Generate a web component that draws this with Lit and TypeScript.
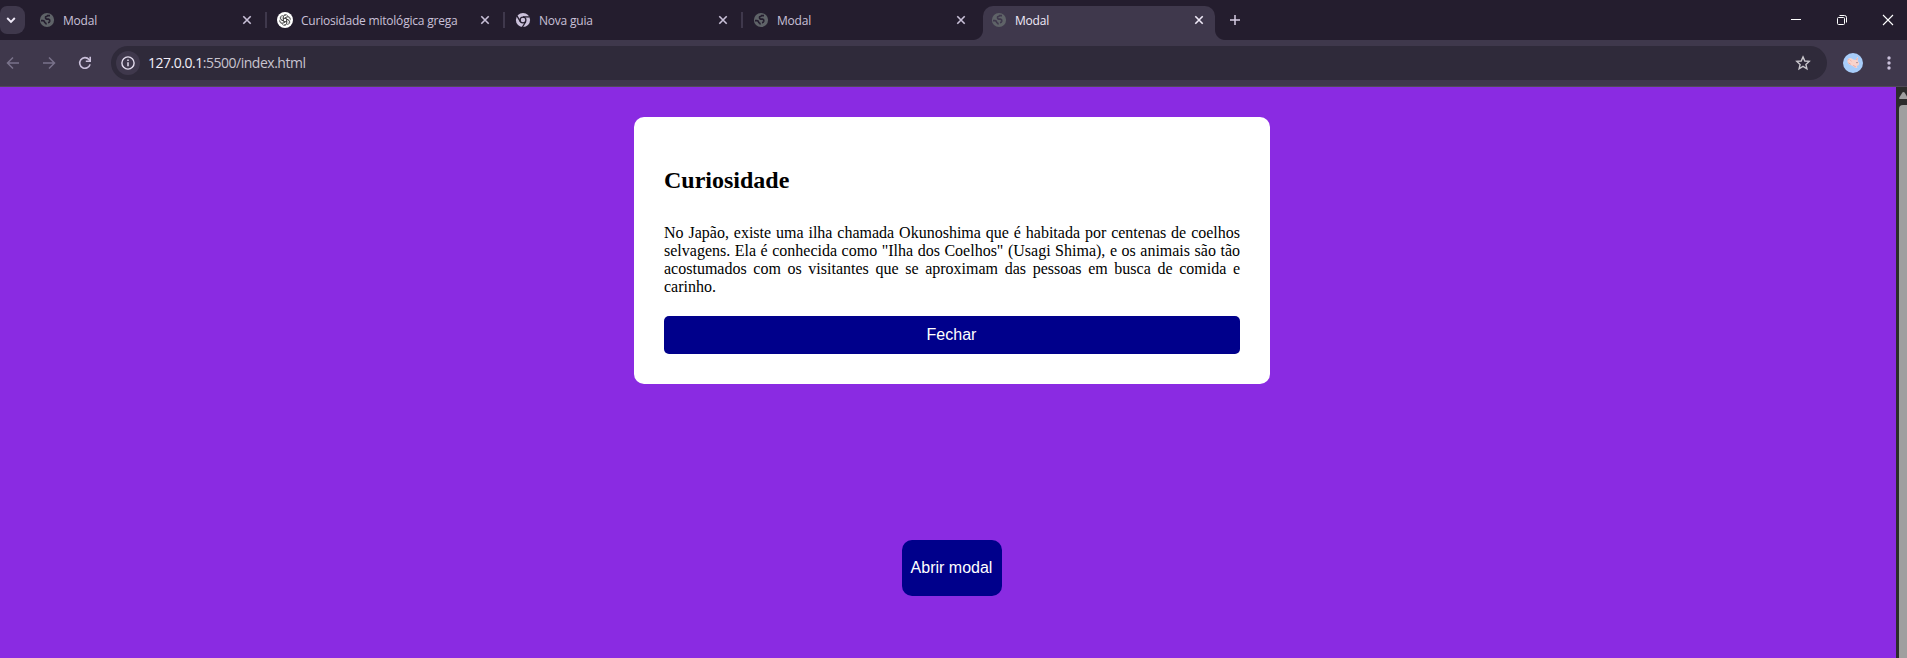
import { LitElement, html, css, svg, nothing } from "lit";
import { customElement } from "lit/decorators.js";
import { classMap } from "lit/directives/class-map.js";

type Favicon = "globe" | "knot" | "chrome";

interface Tab {
  title: string;
  icon: Favicon;
  active?: boolean;
  divider?: boolean;
}

const TABS: Tab[] = [
  { title: "Modal", icon: "globe", divider: true },
  { title: "Curiosidade mitológica grega", icon: "knot", divider: true },
  { title: "Nova guia", icon: "chrome", divider: true },
  { title: "Modal", icon: "globe" },
  { title: "Modal", icon: "globe", active: true },
];

const globe = html`<svg width="16" height="16" viewBox="0 0 16 16">
  <circle cx="8" cy="8" r="7.1" fill="#5f6368" />
  <path d="M11 3.6H8.6Q8.2 4.8 6.6 4.9Q6.2 6.9 7.6 7.1H9.6Q11 7.4 10.8 9.2Q10.6 10.6 9 10.7" class="land" />
  <path d="M2 8.6H4Q5.6 8.9 5.7 10.4Q7.2 10.8 7.2 12.4" class="land" />
</svg>`;

const knot = html`<svg width="16" height="16" viewBox="0 0 16 16">
  <circle cx="8" cy="8" r="8" fill="#fff" />
  <g fill="none" stroke="#333" stroke-width=".65">
    ${[0, 60, 120, 180, 240, 300].map(
      (a) => svg`<path transform="rotate(${a} 8 8)" d="M6.3 9V5.2C6.3 2.2 9.6 1.7 10.8 3.9M6.3 7L9.6 5.1C10.8 4.4 12.4 5 12.6 6.6" />`
    )}
  </g>
</svg>`;

const chrome = html`<svg width="16" height="16" viewBox="0 0 16 16">
  <circle cx="8" cy="8" r="7.1" fill="#cbc1db" />
  <circle cx="8" cy="8" r="2.9" fill="none" stroke="#241d2e" stroke-width="1.3" />
  <g stroke="#241d2e" stroke-width="1.3">
    <path d="M8 4.9H14.6" />
    <path d="M8 4.9H14.6" transform="rotate(120 8 8)" />
    <path d="M8 4.9H14.6" transform="rotate(240 8 8)" />
  </g>
</svg>`;

const FAVICONS = { globe, knot, chrome };

@customElement("browser-tab-strip")
class BrowserTabStrip extends LitElement {
  static styles = css`
    :host {
      display: flex;
      height: 40px;
      background: #241d2e;
      font: 12px/16px "Open Sans", "Noto Sans", sans-serif;
      color: #c9c0d8;
    }
    svg { display: block; flex: none; }
    .search {
      width: 25px;
      height: 28px;
      margin: 6px 6px 0 0;
      border-radius: 7px 9px 9px 7px;
      background: #3f384c;
      display: flex;
      align-items: center;
      justify-content: flex-end;
      padding-right: 9px;
      box-sizing: border-box;
    }
    .tabs { display: flex; }
    .tab {
      width: 232px;
      box-sizing: border-box;
      height: 34px;
      margin-top: 6px;
      padding: 0 11px 6px 8px;
      display: flex;
      align-items: center;
      color: #c9c0d8;
    }
    .title {
      flex: 1;
      margin-left: 8px;
      white-space: nowrap;
      padding-top: 1px;
      letter-spacing: -0.21px;
    }
    .land { fill: none; stroke: #241d2e; stroke-width: 1.6; }
    .active {
      position: relative;
      background: #3f384c;
      border-radius: 10px 10px 0 0;
      color: #f0eaf8;
    }
    .active .land { stroke: #3f384c; }
    .active::before,
    .active::after {
      content: "";
      position: absolute;
      bottom: 0;
      width: 10px;
      height: 10px;
    }
    .active::before {
      left: -10px;
      background: radial-gradient(circle at 0 0, transparent 9.5px, #3f384c 10.5px);
    }
    .active::after {
      right: -10px;
      background: radial-gradient(circle at 100% 0, transparent 9.5px, #3f384c 10.5px);
    }
    .gap {
      width: 6px;
      display: flex;
      justify-content: center;
    }
    .rule { width: 2px; height: 16px; margin-top: 12px; background: #3f384c; }
    .new { margin: 15px 0 0 15px; }
    .controls {
      margin-left: auto;
      display: flex;
      gap: 34px;
      padding: 14px 13px 0 0;
    }
  `;

  render() {
    return html`
      <div class="search">
        <svg width="10" height="8" viewBox="0 0 10 8">
          <path d="M1.2 2L5 5.8L8.8 2" fill="none" stroke="#f0eaf8" stroke-width="1.9" />
        </svg>
      </div>
      <div class="tabs">
        ${TABS.map(
          (t) => html`
            <div class=${classMap({ tab: true, active: !!t.active })}>
              ${FAVICONS[t.icon]}
              <span class="title">${t.title}</span>
              <svg width="10" height="10" viewBox="0 0 10 10">
                <path d="M1.3 1.3L8.7 8.7M8.7 1.3L1.3 8.7" stroke="currentColor" stroke-width="1.6" />
              </svg>
            </div>
            ${t.active ? nothing : html`<div class="gap">${t.divider ? html`<div class="rule"></div>` : nothing}</div>`}
          `
        )}
      </div>
      <svg class="new" width="11" height="11" viewBox="0 0 11 11">
        <path d="M5 0V10M0 5H10" stroke="#d6cde4" stroke-width="1.5" />
      </svg>
      <div class="controls">
        <svg width="12" height="12" viewBox="0 0 12 12"><path d="M1 5.5H11" stroke="#fff" /></svg>
        <svg width="12" height="12" viewBox="0 0 12 12">
          <rect x="1.5" y="3.5" width="7" height="7" rx="1" fill="none" stroke="#fff" />
          <path d="M3.5 1.5H8.5Q10.5 1.5 10.5 3.5V8.5" fill="none" stroke="#fff" />
        </svg>
        <svg width="12" height="12" viewBox="0 0 12 12">
          <path d="M1 1L11 11M11 1L1 11" stroke="#fff" stroke-width="1.1" />
        </svg>
      </div>
    `;
  }
}

@customElement("browser-toolbar")
class BrowserToolbar extends LitElement {
  static styles = css`
    :host {
      display: flex;
      align-items: center;
      height: 47px;
      box-sizing: border-box;
      padding: 0 12px 1px 5px;
      border-bottom: 1px solid #514a58;
      background: #3f384c;
    }
    svg { display: block; flex: none; }
    .nav { display: flex; gap: 20px; }
    .address {
      flex: 1;
      height: 34px;
      margin-left: 18px;
      padding: 0 16px 0 5px;
      box-sizing: border-box;
      border-radius: 17px;
      background: #2f2a3a;
      display: flex;
      align-items: center;
      font: 14px/20px "Open Sans", "Noto Sans", sans-serif;
      color: #c8c3cf;
    }
    .info {
      width: 24px;
      height: 24px;
      border-radius: 12px;
      background: #3f384c;
      display: grid;
      place-items: center;
    }
    .url { flex: 1; margin-left: 8px; letter-spacing: -0.48px; }
    .host { color: #f2eef8; }
    .avatar { margin-left: 16px; }
    .menu { margin-left: 20px; }
  `;

  render() {
    return html`
      <div class="nav">
        <svg width="16" height="16" viewBox="0 0 16 16">
          <path d="M14 8H3M8 2.5L2.5 8L8 13.5" fill="none" stroke="#79728a" stroke-width="1.5" />
        </svg>
        <svg width="16" height="16" viewBox="0 0 16 16">
          <path d="M2 8H13M8 2.5L13.5 8L8 13.5" fill="none" stroke="#79728a" stroke-width="1.5" />
        </svg>
        <svg width="16" height="16" viewBox="0 0 16 16">
          <path d="M13.1 9.4A5.3 5.3 0 1 1 12 4.5L13 5.8" fill="none" stroke="#cbc1db" stroke-width="1.6" />
          <path d="M13.2 1.8V6.2H8.8" fill="none" stroke="#cbc1db" stroke-width="1.6" />
        </svg>
      </div>
      <div class="address">
        <div class="info">
          <svg width="14" height="14" viewBox="0 0 14 14">
            <circle cx="7" cy="7" r="6.1" fill="none" stroke="#e3dced" stroke-width="1.4" />
            <path d="M7 6.2V10.3M7 3.6V5" stroke="#e3dced" stroke-width="1.5" />
          </svg>
        </div>
        <span class="url"><span class="host">127.0.0.1</span>:5500/index.html</span>
        <svg width="16" height="16" viewBox="0 0 16 16">
          <path
            d="M8 1.9L9.8 6L14.2 6.4L10.9 9.4L11.9 13.8L8 11.4L4.1 13.8L5.1 9.4L1.8 6.4L6.2 6Z"
            fill="none"
            stroke="#c9c6cc"
            stroke-width="1.4"
          />
        </svg>
      </div>
      <svg class="avatar" width="20" height="20" viewBox="0 0 20 20">
        <circle cx="10" cy="10" r="10" fill="#a8cdfa" />
        <path d="M4.4 7.2Q5.3 4.5 8.3 5.2L10.4 6.4L12.6 7L14.4 4.1L15 4.5L14.7 7.7L16.2 10.2L15.6 12.2L13.6 12.9L14.6 14.8L12.5 15L9.8 13L6.4 11.6L4.7 9.8Z" fill="#f8d3cb" />
        <path d="M5 7.4L6.2 6.1M7.4 7.2L8.5 8.4M5.4 9.8L7.8 11.3M13.6 7L14.3 5.3M10.2 12.3L12.9 14" stroke="#eda49d" stroke-width=".9" />
        <circle cx="14" cy="9.6" r=".55" fill="#705064" />
      </svg>
      <svg class="menu" width="12" height="16" viewBox="0 0 12 16">
        <circle cx="6" cy="3" r="1.7" fill="#cbc1db" />
        <circle cx="6" cy="8" r="1.7" fill="#cbc1db" />
        <circle cx="6" cy="13" r="1.7" fill="#cbc1db" />
      </svg>
    `;
  }
}

@customElement("modal-page")
class ModalPage extends LitElement {
  static styles = css`
    :host {
      flex: 1;
      display: flex;
      min-height: 0;
      background: #8a2be2;
      font: 16px/18px "Liberation Serif", "Times New Roman", serif;
      color: #000;
    }
    .page {
      flex: 1;
      display: flex;
      flex-direction: column;
      align-items: center;
      padding: 30px 0 0 8px;
    }
    .card {
      width: 636px;
      height: 267px;
      box-sizing: border-box;
      padding: 30px;
      border-radius: 10px;
      background: #fff;
      display: flex;
      flex-direction: column;
    }
    h2 { margin: 20px 0 0; font-size: 24px; line-height: 27px; }
    p { margin: 30px 0 0; text-align: justify; }
    button {
      border: 0;
      background: #00008b;
      color: #fff;
      font: 16px/18px "Liberation Sans", Arial, sans-serif;
      padding: 0 1px 0 0;
    }
    .close { height: 38px; margin-top: auto; border-radius: 5px; }
    .open { width: 100px; height: 56px; margin-top: 156px; border-radius: 10px; }
    .scrollbar {
      width: 11px;
      box-sizing: border-box;
      padding: 5px 0 0 3px;
      background: #2c2c2c;
      display: flex;
      flex-direction: column;
    }
    .scrollbar svg { display: block; }
    .thumb { flex: 1; margin-top: 6px; border-radius: 4px 0 0 0; background: #9f9f9f; }
  `;

  render() {
    return html`
      <main class="page">
        <section class="card">
          <h2>Curiosidade</h2>
          <p>
            No Japão, existe uma ilha chamada Okunoshima que é habitada por centenas de coelhos
            selvagens. Ela é conhecida como "Ilha dos Coelhos" (Usagi Shima), e os animais são tão
            acostumados com os visitantes que se aproximam das pessoas em busca de comida e
            carinho.
          </p>
          <button class="close">Fechar</button>
        </section>
        <button class="open">Abrir modal</button>
      </main>
      <div class="scrollbar">
        <svg width="8" height="7" viewBox="0 0 8 7">
          <path d="M3.4 .6Q4.5 -.4 5.6 .6L9 6Q9 7 8 7H1Q0 7 .2 5.8Z" fill="#9f9f9f" />
        </svg>
        <div class="thumb"></div>
      </div>
    `;
  }
}

@customElement("app-root")
class AppRoot extends LitElement {
  static styles = css`
    :host {
      display: flex;
      flex-direction: column;
      height: 100vh;
      overflow: hidden;
    }
  `;

  render() {
    return html`
      <browser-tab-strip></browser-tab-strip>
      <browser-toolbar></browser-toolbar>
      <modal-page></modal-page>
    `;
  }
}
